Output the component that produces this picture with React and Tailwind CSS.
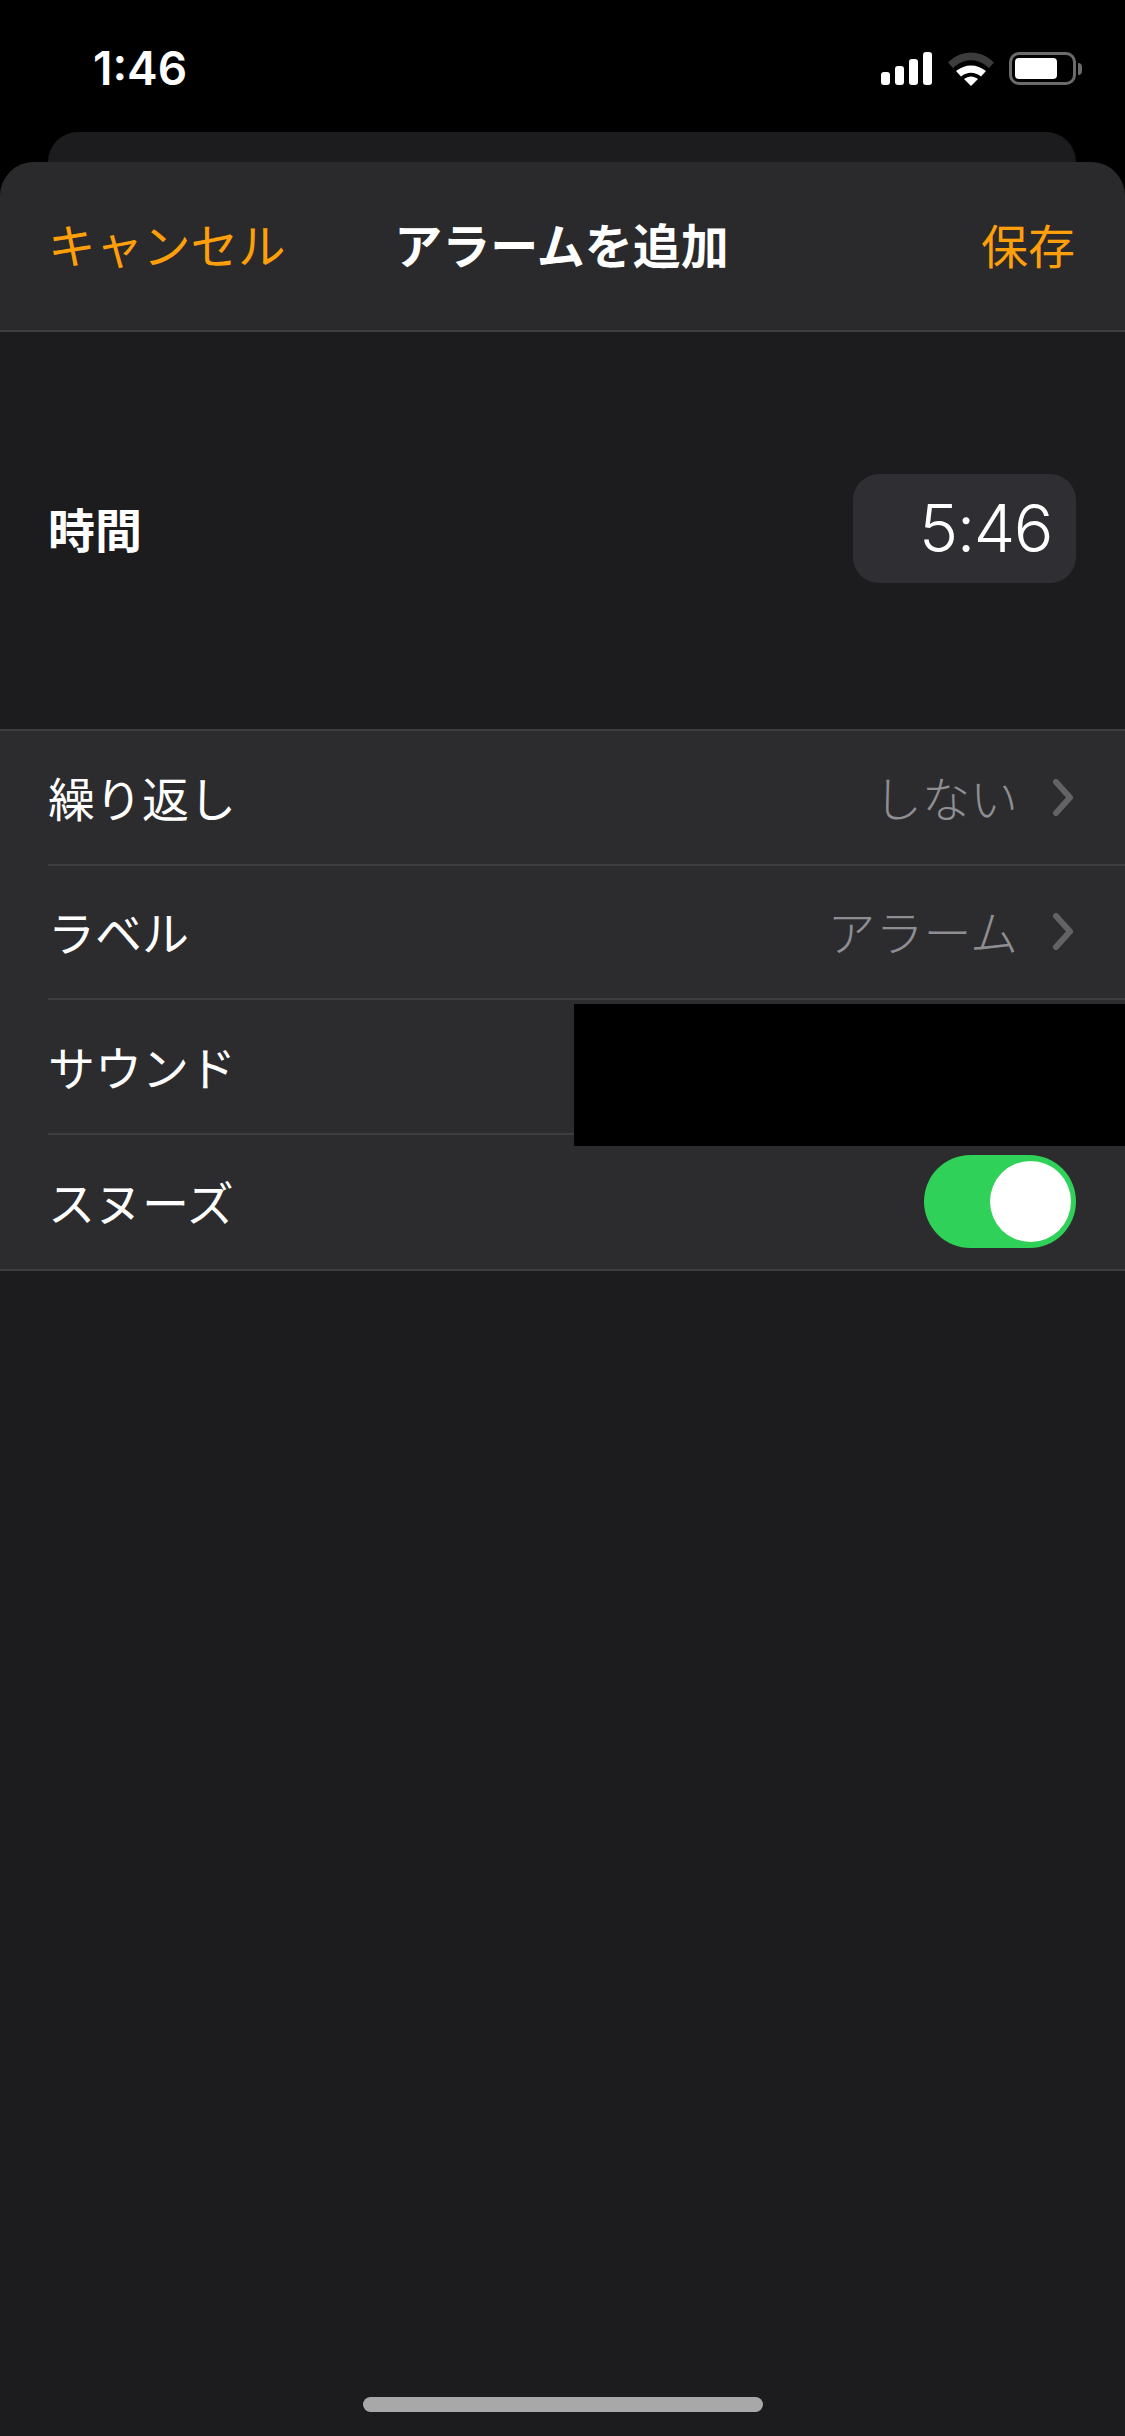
import React from 'react';

const FONT = 'font-["Inter","Noto_Sans_CJK_JP",sans-serif]';

function SignalIcon() {
  return (
    <svg width="52" height="33" viewBox="0 0 52 33" fill="#fff">
      <rect x="0" y="20" width="9" height="13" rx="3" />
      <rect x="14" y="14" width="9" height="19" rx="3" />
      <rect x="28" y="7" width="9" height="26" rx="3" />
      <rect x="42" y="0" width="9" height="33" rx="3" />
    </svg>
  );
}

function WifiIcon() {
  return (
    <svg width="46" height="34" viewBox="0 0 46 34">
      <path d="M0 10.5C13 -3 33 -3 46 10.5L41 16C30 5.5 16 5.5 5 16Z" fill="#3c3c3c" />
      <path d="M8 19C17 11.5 29 11.5 38 19L33 24.5C26.5 19.5 19.5 19.5 13 24.5Z" fill="#fff" />
      <path d="M16 27C20.5 23.5 25.5 23.5 30 27L23 34Z" fill="#fff" />
    </svg>
  );
}

function BatteryIcon() {
  return (
    <div className="flex items-center gap-[2px]">
      <div className="w-[67px] h-[33px] rounded-[10px] border-[3px] border-[#6b6b6b] p-[3px]">
        <div className="w-[42px] h-full rounded-[4px] bg-white" />
      </div>
      <div className="w-[4px] h-[12px] rounded-r-full bg-[#6b6b6b]" />
    </div>
  );
}

function Chevron() {
  return (
    <svg width="24" height="37" viewBox="0 0 24 37" fill="none" className="ml-[34px]">
      <path d="M4 3L18 18.5L4 34" stroke="#636366" strokeWidth="6" strokeLinecap="round" strokeLinejoin="round" />
    </svg>
  );
}

function Row({ label, last, children }) {
  return (
    <div className="h-[134.5px] pl-12">
      <div className={`h-full flex items-center justify-between pr-[49px] ${last ? '' : 'border-b-2 border-[#3d3d40]'}`}>
        <span className="pt-[5px] text-[47px] text-white font-normal">{label}</span>
        {children}
      </div>
    </div>
  );
}

export default function App() {
  return (
    <div className={`relative flex flex-col w-[1125px] h-[2436px] overflow-hidden bg-black ${FONT}`}>
      {/* Status bar */}
      <div className="h-[132px] flex justify-between pl-[93px] pr-[43px] pt-[52px]">
        <span className="text-[46px] leading-[33px] font-semibold text-white">1:46</span>
        <div className="flex items-start gap-[15px]">
          <SignalIcon />
          <WifiIcon />
          <BatteryIcon />
        </div>
      </div>

      {/* Sheet behind */}
      <div className="h-[30px] mx-12 w-[1028px] rounded-t-[30px] bg-[#1c1c1e]" />

      {/* Sheet */}
      <div className="relative flex-1 flex flex-col rounded-t-[34px] bg-[#1c1c1e] overflow-hidden">
        <div className="h-[168px] pl-12 pr-[50px] grid grid-cols-[1fr_auto_1fr] items-center bg-[#2a2a2c] border-b-2 border-[#3d3d40] box-content">
          <span className="pt-[2px] text-[47.5px] text-[#ff9f0a] font-normal">キャンセル</span>
          <span className="pt-[2px] text-[48px] text-white font-bold">アラームを追加</span>
          <span className="pt-[2px] text-[47px] text-[#ff9f0a] font-normal text-right">保存</span>
        </div>

        {/* Time */}
        <div className="h-[397px] pl-12 pr-[49px] flex items-center justify-between">
          <span className="pt-[2px] text-[47px] text-white font-bold">時間</span>
          <div className="w-[223px] h-[109px] mb-[5px] rounded-[26px] bg-[#2f2f33] flex items-center justify-end pr-6">
            <span className="text-[66px] tracking-[-1.5px] text-white font-light">5:46</span>
          </div>
        </div>

        {/* Rows */}
        <div className="relative bg-[#2c2c2e] border-y-2 border-[#3d3d40]">
          <Row label="繰り返し">
            <div className="flex items-center">
              <span className="pt-[5px] text-[48px] text-[#8e8e93] font-light">しない</span>
              <Chevron />
            </div>
          </Row>
          <Row label="ラベル">
            <div className="flex items-center">
              <span className="pt-[5px] text-[48px] text-[#8e8e93] font-light">アラーム</span>
              <Chevron />
            </div>
          </Row>
          <Row label="サウンド" />
          <Row label="スヌーズ" last>
            <div className="w-[152px] h-[93px] rounded-full bg-[#30d158] flex items-center justify-end pr-[5px]">
              <div className="w-[81px] h-[81px] rounded-full bg-white" />
            </div>
          </Row>
          {/* Redacted block */}
          <div className="absolute left-[574px] right-0 top-[273px] h-[142px] bg-black" />
        </div>

        {/* Home indicator */}
        <div className="mt-auto mb-6 self-center w-[400px] h-[15px] rounded-full bg-[#a8a8a8]" />
      </div>
    </div>
  );
}
